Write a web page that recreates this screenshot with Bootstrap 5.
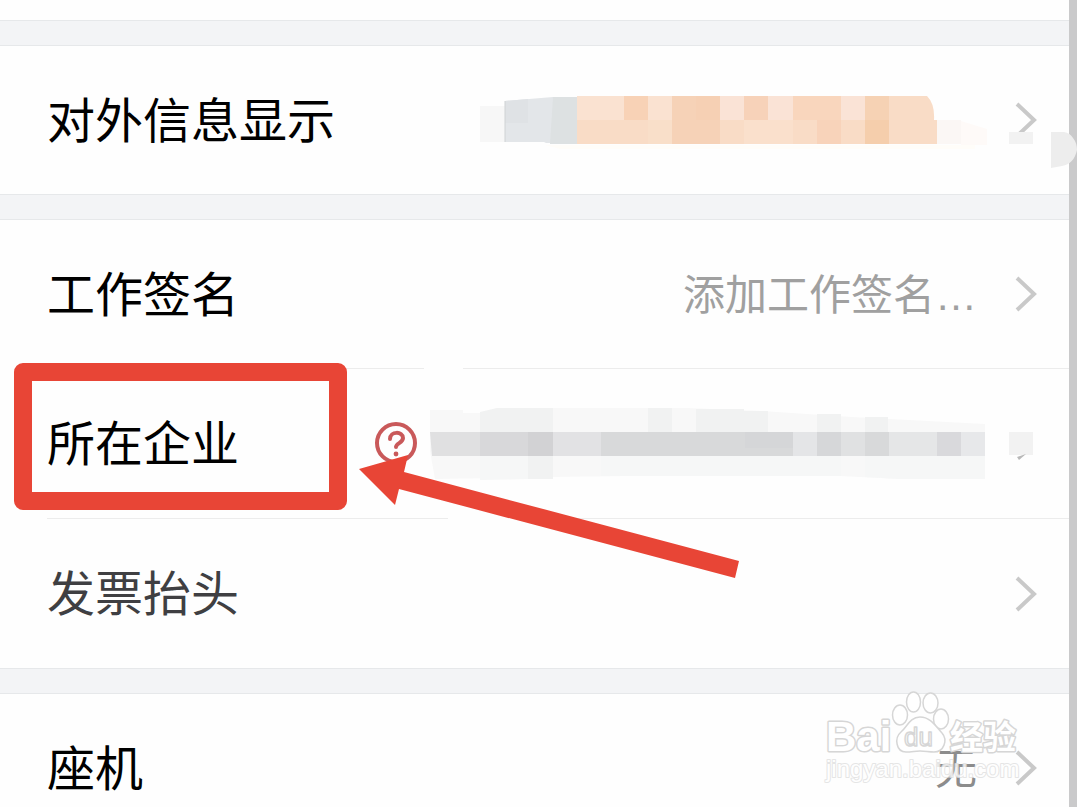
<!DOCTYPE html>
<html lang="zh-CN">
<head>
<meta charset="utf-8">
<meta name="viewport" content="width=device-width, initial-scale=1">
<title>所在企业</title>
<link href="https://cdn.jsdelivr.net/npm/bootstrap@5.3.0/dist/css/bootstrap.min.css" rel="stylesheet">
<style>
body { font-family: "Liberation Sans", "Noto Sans CJK SC", sans-serif; background: #fefefe; color: #000; }
.settings { background: #f3f4f6; gap: 24px; }
.group { background: #fefefe; border-top: 1px solid #e6e8ea; border-bottom: 1px solid #e6e8ea; }
.group-cut { border-top: 0; height: 21px; }
.entry { min-height: 148px; margin-left: 47px; padding-right: 32px; color: #000; font-size: 48px; line-height: 72px; }
.entry + .entry { min-height: 150px; border-top: 1px solid #ececec; }
.entry-soft { color: #3f3f42; }
.entry-label { padding-top: 3px; }
.entry-value { color: #a0a0a0; font-size: 42px; line-height: 60px; margin-right: 38px; padding-top: 3px; }
.entry-value-dark { color: #8c8c8c; }
.track { width: 8px; background: #cacacb; }
.knob { top: 131px; right: 0; }
.frame { left: -33px; top: -6px; width: 333px; height: 147px; border: 18px solid #e84536; border-radius: 9px; pointer-events: none; }
.arrow { left: 309px; top: 84px; pointer-events: none; }
.stamp { right: 48px; top: -6px; pointer-events: none; }
.stamp text { font-family: "Liberation Sans", "Noto Sans CJK SC", sans-serif; }
.mosaic { overflow: visible; }
</style>
</head>
<body>
<div class="d-flex vh-100 overflow-hidden position-relative">
  <main class="settings flex-fill d-flex flex-column">
    <section class="group group-cut flex-shrink-0"></section>

    <section class="group flex-shrink-0">
      <a href="#display" class="entry d-flex align-items-center text-decoration-none">
        <span class="entry-label">对外信息显示</span>
        <svg class="mosaic ms-auto flex-shrink-0" width="535" height="148" viewBox="480 46 535 148" aria-hidden="true">
          <path d="M480 106h25v36h-25z" fill="#f7f7f7"/>
          <path d="M505 101l48-4v46h-7l-2-1h-39z" fill="#e3e6e9"/>
          <path d="M505 101l23-2v24h-23z" fill="#dfe2e5"/><path d="M505 101v41" stroke="#cfd2d4"/>
          <path d="M553 97h24v47h-27z" fill="#dde1e2"/>
          <path d="M577 96h350q8 8 7 24h3v24H577z" fill="#f9dcc6"/>
          <path d="M577 96h48v24h-48zM648 96h24v24h-24z" fill="#fae2d1"/>
          <path d="M624 96h24v24h-24z" fill="#f8d2b6"/>
          <path d="M648 120h24v24h-24z" fill="#f9dfc9"/>
          <path d="M672 96h48v48h-48z" fill="#f6d2b7"/><path d="M696 96h24v24h-24z" fill="#f6d0b4"/>
          <path d="M720 96h24v24h-24zM768 96h25v24h-25zM841 96h24v24h-24z" fill="#fae3d6"/>
          <path d="M744 96h24v24h-24z" fill="#f7d2b9"/>
          <path d="M793 96h48v24h-48z" fill="#f9d6bd"/>
          <path d="M744 120h49v24h-49z" fill="#fae0cc"/>
          <path d="M817 120h24v24h-24z" fill="#f8d3ba"/>
          <path d="M865 96h24v24h-24z" fill="#f6d2b4"/><path d="M865 120h24v24h-24z" fill="#f5ceac"/>
          <path d="M937 120h24v24h-24z" fill="#fbf7f5"/><path d="M961 121l26 8v16h-26z" fill="#fefaf8"/>
          <path d="M545 145h430v4H560z" fill="#fffdf9"/>
        </svg>
        <svg class="mosaic flex-shrink-0" width="22" height="36" viewBox="0 0 22 36" fill="none" aria-hidden="true"><path d="M2 2l17 16L2 34" stroke="#c9c9c9" stroke-width="4"/><path d="M-6 30h24v12H-6z" fill="#f2f2f2"/></svg>
      </a>
    </section>

    <section class="group flex-shrink-0">
      <a href="#signature" class="entry d-flex align-items-center text-decoration-none">
        <span class="entry-label">工作签名</span>
        <span class="entry-value ms-auto">添加工作签名…</span>
        <svg class="flex-shrink-0" width="22" height="36" viewBox="0 0 22 36" fill="none" aria-hidden="true"><path d="M2 2l17 16L2 34" stroke="#c9c9c9" stroke-width="4"/></svg>
      </a>
      <div class="entry d-flex align-items-center position-relative">
        <span class="entry-label">所在企业</span>
        <button type="button" class="btn p-0 border-0 ms-auto d-flex" aria-label="帮助">
          <svg class="mosaic" width="42" height="42" viewBox="0 0 42 42" fill="none" stroke="#c9595a" stroke-linecap="round"><circle cx="21" cy="20" r="19" stroke-width="4"/><path d="M15 16c0-8 13-8 13-1 0 5-7 5-7 9" stroke-width="4"/><circle cx="21" cy="31" r="2.4" fill="#c9595a" stroke="none"/></svg>
        </button>
        <svg class="mosaic flex-shrink-0" width="620" height="149" viewBox="417 369 620 149" aria-hidden="true">
          <path d="M424 366h39v6h-39zM448 515h80v5h-80z" fill="#fefefe"/>
          <path d="M430 410h33v3h20l14-5h190l75 3 90 6 133 7v55H900l-60-3-130-1-160 2-115 2-5-28z" fill="#f8f8f8"/>
          <path d="M480 412l17-4h31v24h-48zM528 408h25v71h-25zM648 408h24v24h-24zM696 409h48v23h-48zM744 411h24v21h-24zM817 414h24v18h-24zM865 417h23v15h-23z" fill="#f1f2f2"/>
          <path d="M480 456h48v23l-48 1zM601 456h240v20H601zM865 456h120v23H900l-35-2z" fill="#f6f7f7"/>
          <path d="M430 432h50v24h-48z" fill="#e0e0e1"/>
          <path d="M480 432h48v24h-48z" fill="#d8d8da"/><path d="M528 432h25v24h-25z" fill="#d2d2d4"/>
          <path d="M553 432h48v24h-48z" fill="#e2e2e4"/>
          <path d="M601 432h192v24H601z" fill="#d8d9da"/><path d="M745 432h48v16h-48z" fill="#d5d6d8"/>
          <path d="M793 432h24v24h-24z" fill="#e4e5e7"/><path d="M817 432h24v24h-24z" fill="#d6d7d9"/>
          <path d="M841 432h24v24h-24z" fill="#e0e1e2"/><path d="M865 432h24v24h-24z" fill="#d8d9da"/>
          <path d="M889 432h48v24h-48z" fill="#e5e6e7"/><path d="M937 432h24v24h-24z" fill="#d9d9dc"/>
          <path d="M961 432h24v24h-24z" fill="#e7e8ea"/><path d="M1009 432h24v23h-24z" fill="#f2f2f2"/>
          <path d="M1017 457l9-3-7 6z" fill="#b8b8b8"/>
        </svg>
        <!-- callout: frame round the label, arrow pointing at it -->
        <div class="frame position-absolute"></div>
        <svg class="arrow position-absolute" width="386" height="130" viewBox="356 453 386 130" aria-hidden="true"><path d="M359 469l49-14-4 17 335 89-4 17-336-89-4 16z" fill="#e84536"/></svg>
      </div>
      <a href="#invoice" class="entry entry-soft d-flex align-items-center text-decoration-none">
        <span class="entry-label">发票抬头</span>
        <svg class="ms-auto flex-shrink-0" width="22" height="36" viewBox="0 0 22 36" fill="none" aria-hidden="true"><path d="M2 2l17 16L2 34" stroke="#c9c9c9" stroke-width="4"/></svg>
      </a>
    </section>

    <section class="group flex-shrink-0 position-relative">
      <a href="#phone" class="entry d-flex align-items-center text-decoration-none">
        <span class="entry-label">座机</span>
        <span class="entry-value entry-value-dark ms-auto">无</span>
        <svg class="flex-shrink-0" width="22" height="36" viewBox="0 0 22 36" fill="none" aria-hidden="true"><path d="M2 2l17 16L2 34" stroke="#c9c9c9" stroke-width="4"/></svg>
      </a>
      <svg class="stamp position-absolute mosaic" width="196" height="100" viewBox="825 688 196 100" fill="#fff" stroke="#d6d6d6" stroke-width="1.5" stroke-linejoin="round">
        <ellipse cx="900" cy="715" rx="7.5" ry="10"/><ellipse cx="913.5" cy="702" rx="7" ry="10"/><ellipse cx="930.5" cy="703" rx="7.5" ry="10"/><ellipse cx="941" cy="719" rx="7.5" ry="10"/>
        <path d="M920 717c-10 0-13 10-19 15-7 6-5 20 5 20 6 0 9-1 14-1s9 1 14 1c10 0 14-12 8-19-6-6-11-16-22-16z"/>
        <text x="826" y="751" font-size="42" font-weight="700" paint-order="stroke" stroke-width="3">Bai</text>
        <text x="904" y="746" font-size="26">du</text>
        <text x="950" y="749" font-size="33" font-weight="700" paint-order="stroke" stroke-width="3">经验</text>
        <text x="826" y="777" font-size="24" paint-order="stroke" stroke-width="2" stroke="#e0e0e0" opacity=".8">jingyan.baidu.com</text>
      </svg>
    </section>
  </main>
  <div class="track flex-shrink-0"></div>
  <svg class="knob position-absolute" width="26" height="37" viewBox="0 0 26 37" aria-hidden="true"><path d="M0 1h13q6 1 9 6 4 5 4 12-3 14-15 16L0 37z" fill="#ededed"/></svg>
</div>
<script src="https://cdn.jsdelivr.net/npm/bootstrap@5.3.0/dist/js/bootstrap.bundle.min.js"></script>
</body>
</html>
